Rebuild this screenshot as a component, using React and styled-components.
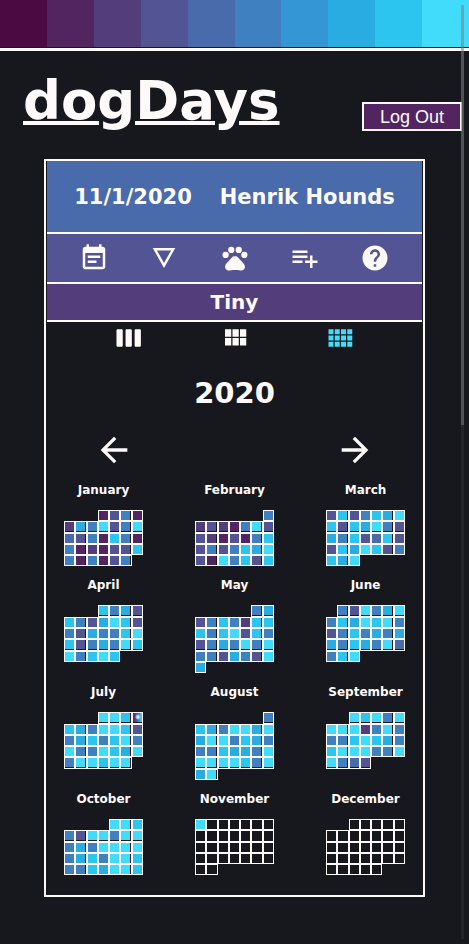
import React from "react";
import styled, { createGlobalStyle } from "styled-components";

const palette = {
  a: "#4b0a42",
  b: "#522460",
  c: "#543d7b",
  d: "#525494",
  e: "#496aab",
  f: "#3f80c1",
  g: "#3496d5",
  h: "#29ace2",
  i: "#2cc5ef",
  j: "#41dcfb",
};
const ink = "#16181d";
const snow = "#fffafa";

const GlobalStyle = createGlobalStyle`
  *, *::before, *::after { box-sizing: border-box; }
  body {
    margin: 0;
    background: ${ink};
    color: ${snow};
    font-family: "DejaVu Sans", sans-serif;
    font-weight: 700;
  }
`;

const Page = styled.div`
  padding-bottom: 40px;
`;

const Stripes = styled.div`
  display: flex;
  height: 51px;
  padding-bottom: 1px;
  border-bottom: 3px solid ${snow};
`;

const Stripe = styled.span`
  flex: 1;
  background: ${(p) => p.$color};
`;

const Header = styled.header`
  display: flex;
  justify-content: space-between;
  align-items: flex-end;
  padding: 20px 7px 28px 23px;
`;

const Brand = styled.h1`
  margin: 0;
  font-size: 53px;
  line-height: 60px;
`;

const BrandLink = styled.a`
  color: inherit;
  text-decoration: underline;
  text-decoration-thickness: 4px;
  text-underline-offset: 2px;
`;

const LogOut = styled.button`
  width: 100px;
  height: 29px;
  padding: 0;
  border: 2px solid ${snow};
  background: ${palette.b};
  color: ${snow};
  font: 18px/24px "Liberation Sans", sans-serif;
`;

const Card = styled.main`
  margin: 0 44px;
  padding: 0 1px 20px;
  border: 2px solid ${snow};
`;

const Banner = styled.div`
  display: flex;
  justify-content: center;
  align-items: center;
  gap: 28px;
  height: 73px;
  border-bottom: 2px solid ${snow};
  background: ${palette.e};
  font-size: 21px;
  line-height: 24px;
  white-space: nowrap;
`;

const Toolbar = styled.nav`
  display: flex;
  justify-content: space-between;
  align-items: center;
  height: 50px;
  padding: 0 32px;
  border-bottom: 2px solid ${snow};
  background: ${palette.d};
`;

const DogName = styled.h2`
  margin: 0;
  height: 38px;
  border-bottom: 2px solid ${snow};
  background: ${palette.c};
  font-size: 20px;
  line-height: 36px;
  text-align: center;
`;

const ViewSwitch = styled.div`
  display: flex;
  justify-content: center;
  gap: 76px;
  padding-top: 1px;
`;

const IconButton = styled.button`
  display: flex;
  padding: 0;
  border: 0;
  background: none;
  color: ${(p) => (p.$active ? palette.j : snow)};
`;

const Year = styled.h2`
  margin: 24px 0 21px;
  font-size: 29px;
  line-height: 32px;
  text-align: center;
`;

const YearNav = styled.div`
  display: flex;
  justify-content: space-between;
  padding: 0 47px;
`;

const Months = styled.div`
  display: grid;
  grid-template-columns: repeat(3, 79px);
  justify-content: center;
  gap: 11px 52px;
  padding-top: 12px;
`;

const Month = styled.section`
  display: flex;
  flex-direction: column;
  align-items: center;
  gap: 12px;
`;

const MonthName = styled.h3`
  margin: 0;
  font-size: 12px;
  line-height: 16px;
`;

const Days = styled.div`
  display: grid;
  grid-template-columns: repeat(7, 1fr);
  width: 100%;
`;

const Day = styled.div`
  grid-column-start: ${(p) => p.$column || "auto"};
  aspect-ratio: 1;
  border: 1px solid ${snow};
`;

const Fill = styled.div`
  width: 9px;
  height: 9px;
  background: ${(p) => p.$color};
`;

const ScrollTrack = styled.div`
  position: fixed;
  top: 5px;
  right: 5px;
  bottom: 5px;
  width: 3px;
  background: rgba(128, 128, 128, 0.12);
`;

const ScrollThumb = styled.div`
  height: 45%;
  background: rgba(128, 128, 128, 0.5);
`;

const icons = {
  note: "M17 10H7v2h10v-2zm2-7h-1V1h-2v2H8V1H6v2H5c-1.11 0-1.99.9-1.99 2L3 19c0 1.1.89 2 2 2h14c1.1 0 2-.9 2-2V5c0-1.1-.9-2-2-2zm0 16H5V8h14v11zm-5-5H7v2h7v-2z",
  details: "M3 4l9 16 9-16H3zm3.38 2h11.25L12 16z",
  playlistAdd: "M14 10H2v2h12v-2zm0-4H2v2h12V6zm4 8v-4h-2v4h-4v2h4v4h2v-4h4v-2h-4zM2 16h8v-2H2v2z",
  help: "M12 2C6.48 2 2 6.48 2 12s4.48 10 10 10 10-4.48 10-10S17.52 2 12 2zm1 17h-2v-2h2v2zm2.07-7.75l-.9.92C13.45 12.9 13 13.5 13 15h-2v-.5c0-1.1.45-2.1 1.17-2.83l1.24-1.26c.37-.36.59-.86.59-1.41 0-1.1-.9-2-2-2s-2 .9-2 2H8c0-2.21 1.79-4 4-4s4 1.79 4 4c0 .88-.36 1.68-.93 2.25z",
  week: "M6 5H3c-.55 0-1 .45-1 1v12c0 .55.45 1 1 1h3c.55 0 1-.45 1-1V6c0-.55-.45-1-1-1zm14.5 0h-3c-.55 0-1 .45-1 1v12c0 .55.45 1 1 1h3c.55 0 1-.45 1-1V6c0-.55-.45-1-1-1zm-7.25 0h-3c-.55 0-1 .45-1 1v12c0 .55.45 1 1 1h3c.55 0 1-.45 1-1V6c0-.55-.45-1-1-1z",
  month: "M4 11h5V5H4v6zm0 7h5v-6H4v6zm6 0h5v-6h-5v6zm6 0h5v-6h-5v6zm-6-7h5V5h-5v6zm6-6v6h5V5h-5z",
  year: "M2 9h4V5H2v4zm0 5h4v-4H2v4zm5 0h4v-4H7v4zm5 0h4v-4h-4v4zM7 9h4V5H7v4zm5-4v4h4V5h-4zm5 9h4v-4h-4v4zM2 19h4v-4H2v4zm5 0h4v-4H7v4zm5 0h4v-4h-4v4zm5 0h4v-4h-4v4zm0-14v4h4V5h-4z",
  back: "M20 11H7.83l5.59-5.59L12 4l-8 8 8 8 1.41-1.41L7.83 13H20v-2z",
  forward: "M12 4l-1.41 1.41L16.17 11H4v2h12.17l-5.58 5.59L12 20l8-8z",
};

function Icon({ name, size = 30 }) {
  return (
    <svg width={size} height={size} viewBox="0 0 24 24" fill="currentColor" aria-hidden="true">
      {name === "paw" ? (
        <>
          <circle cx="4.5" cy="9.5" r="2.5" />
          <circle cx="9" cy="5.5" r="2.5" />
          <circle cx="15" cy="5.5" r="2.5" />
          <circle cx="19.5" cy="9.5" r="2.5" />
          <path d="M17.34 14.86c-.87-1.02-1.6-1.89-2.48-2.91-.46-.54-1.05-1.08-1.75-1.32-.11-.04-.22-.07-.33-.09-.25-.04-.52-.04-.78-.04s-.53 0-.79.05c-.11.02-.22.05-.33.09-.7.24-1.28.78-1.75 1.32-.87 1.02-1.6 1.89-2.48 2.91-1.31 1.31-2.92 2.76-2.62 4.79.29 1.02 1.02 2.03 2.33 2.32.73.15 3.06-.44 5.54-.44h.18c2.48 0 4.81.58 5.54.44 1.31-.29 2.04-1.31 2.33-2.32.31-2.04-1.3-3.49-2.61-4.8z" />
        </>
      ) : (
        <path d={icons[name]} />
      )}
    </svg>
  );
}

const special =
  "radial-gradient(circle at 5px 4px, #e8e8f8 0 1px, #8fa8dc 2px, transparent 3px), linear-gradient(90deg, #522460, #525494 40%, #3496d5 70%, #41dcfb)";

/* One letter per day: a palette key, "*" for a day with several entries, "." for no entry. */
const months = [
  { name: "January", start: 4, days: "bdfb chfjdfj edfbifb fbcbddi fbfbdf" },
  { name: "February", start: 7, days: "f cdcbfjd dcbdbfi dfdfihj dbjfidi" },
  { name: "March", start: 1, days: "didfihj idihjfd hfideid dihjidf ihj" },
  { name: "April", start: 4, days: "ifhd ifdhjid fdhffij idfhfji jfiji" },
  { name: "May", start: 6, days: "fh dfifcii ifijdif dfhfjfj ffdhfdj h" },
  { name: "June", start: 2, days: "fdjfhj fihjijf dfifhfh hfihfje fij" },
  { name: "July", start: 4, days: "jji* ihfjjid fhifijf jffjihj fjjijj" },
  { name: "August", start: 7, days: "f ihfjjhj hjjfihf ffihhfj jjjjifj hj" },
  { name: "September", start: 3, days: "jijfj jjjcfjf ffijihf ijjjffj jfed" },
  { name: "October", start: 5, days: "jji fdjjfjj fhfjjjj fhifjji ffihjji" },
  { name: "November", start: 1, days: "j" + ".".repeat(29) },
  { name: "December", start: 3, days: ".".repeat(31) },
];

const colorOf = (key) => (key === "*" ? special : palette[key]);

const tools = [
  ["note", "Log"],
  ["details", "Details"],
  ["paw", "Dogs"],
  ["playlistAdd", "Add entry"],
  ["help", "Help"],
];

const views = [
  ["week", "Week view"],
  ["month", "Month view"],
  ["year", "Year view"],
];

export default function App() {
  return (
    <Page>
      <GlobalStyle />
      <Stripes>
        {Object.values(palette).map((color) => (
          <Stripe key={color} $color={color} />
        ))}
      </Stripes>
      <Header>
        <Brand>
          <BrandLink href="#">dogDays</BrandLink>
        </Brand>
        <LogOut type="button">Log Out</LogOut>
      </Header>
      <Card>
        <Banner>
          <span>11/1/2020</span>
          <span>Henrik Hounds</span>
        </Banner>
        <Toolbar>
          {tools.map(([name, label]) => (
            <IconButton key={name} type="button" aria-label={label}>
              <Icon name={name} />
            </IconButton>
          ))}
        </Toolbar>
        <DogName>Tiny</DogName>
        <ViewSwitch>
          {views.map(([name, label]) => (
            <IconButton key={name} type="button" aria-label={label} $active={name === "year"}>
              <Icon name={name} />
            </IconButton>
          ))}
        </ViewSwitch>
        <Year>2020</Year>
        <YearNav>
          <IconButton type="button" aria-label="Previous year">
            <Icon name="back" size={40} />
          </IconButton>
          <IconButton type="button" aria-label="Next year">
            <Icon name="forward" size={40} />
          </IconButton>
        </YearNav>
        <Months>
          {months.map((month) => (
            <Month key={month.name}>
              <MonthName>{month.name}</MonthName>
              <Days>
                {[...month.days.replaceAll(" ", "")].map((key, index) => (
                  <Day key={index} $column={index === 0 ? month.start : undefined}>
                    {key !== "." && <Fill $color={colorOf(key)} />}
                  </Day>
                ))}
              </Days>
            </Month>
          ))}
        </Months>
      </Card>
      <ScrollTrack>
        <ScrollThumb />
      </ScrollTrack>
    </Page>
  );
}
